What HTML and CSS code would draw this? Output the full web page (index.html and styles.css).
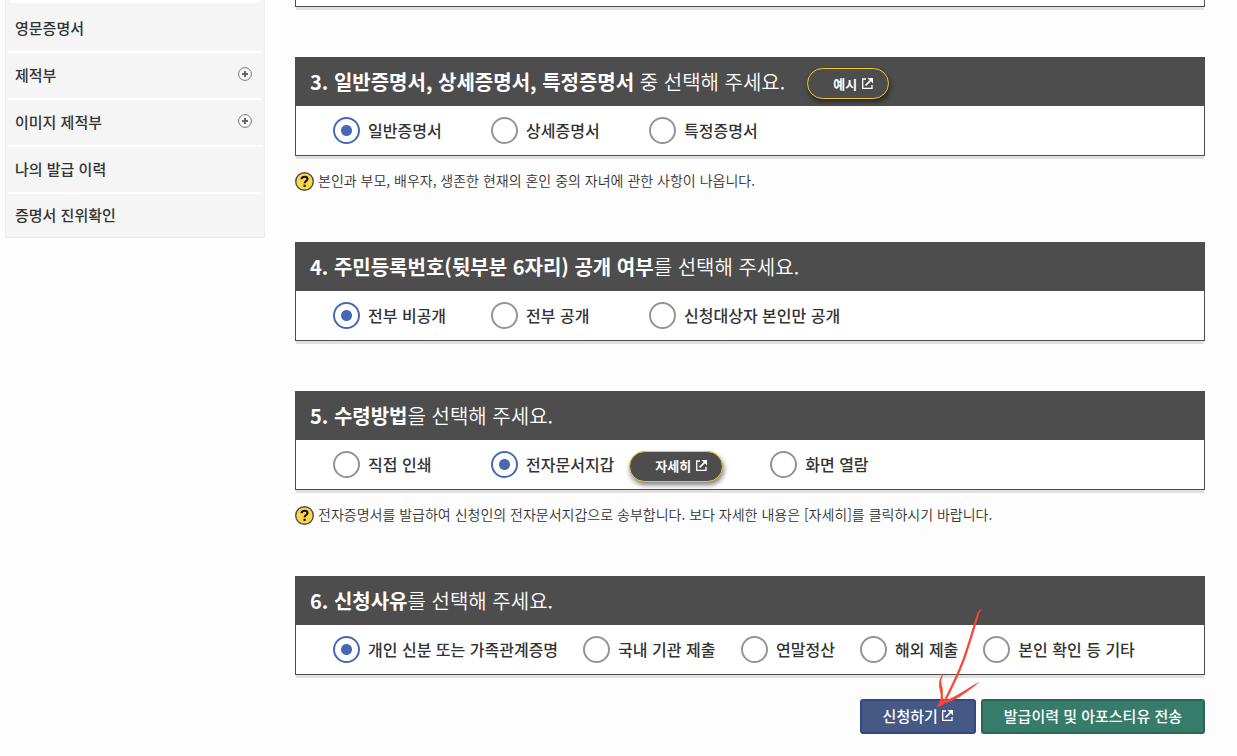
FILE: index.html
```html
<!DOCTYPE html>
<html lang="ko">
<head>
<meta charset="UTF-8">
<meta name="viewport" content="width=device-width, initial-scale=1.0">
<title>증명서 발급 신청</title>
<link rel="stylesheet" href="styles.css">
</head>
<body>

<svg class="defs" aria-hidden="true">
  <symbol id="icon-open" viewBox="0 0 11 11">
    <path d="M4 1H0.700v9.300H10V7" fill="none" stroke="currentColor" stroke-width="1.300"/>
    <path d="M5.500 0H11v5.500L9.300 3.800 8.900 1.900 7.200 1.700z" fill="currentColor"/>
    <path d="M3.600 7.400l5.800-5.800" fill="none" stroke="currentColor" stroke-width="1.600"/>
  </symbol>
  <symbol id="icon-plus" viewBox="0 0 14 14">
    <circle cx="7" cy="7" r="6.400" fill="#fafafa" stroke="#777" stroke-width="1"/>
    <path d="M7 4v6M4 7h6" stroke="#666" stroke-width="2"/>
  </symbol>
  <symbol id="icon-help" viewBox="0 0 19 19">
    <circle cx="9.500" cy="9.500" r="8.800" fill="#fad749" stroke="#4d4d4d" stroke-width="1.400"/>
    <path d="M6.500 7.300C6.600 5.500 8 4.700 9.600 4.700c1.700 0 2.900.9 2.900 2.300 0 2-2.900 2-2.900 4.300" fill="none" stroke="#111" stroke-width="2.100"/>
    <path d="M8.500 12.700h2.200v2.200h-2.200z" fill="#111"/>
  </symbol>
</svg>

<div class="page">
  <nav class="side">
    <div class="side-sub"></div>
    <ul>
      <li><a href="#">영문증명서</a></li>
      <li><a href="#">제적부<svg><use href="#icon-plus"/></svg></a></li>
      <li><a href="#">이미지 제적부<svg><use href="#icon-plus"/></svg></a></li>
      <li><a href="#">나의 발급 이력</a></li>
      <li><a href="#">증명서 진위확인</a></li>
    </ul>
  </nav>

  <main>
    <div class="box box-prev"></div>

    <section>
      <div class="box">
        <h2><span><b>3. 일반증명서, 상세증명서, 특정증명서</b> 중 선택해 주세요.</span>
          <button type="button" class="pill">예시<svg><use href="#icon-open"/></svg></button></h2>
        <div class="options">
          <label><input type="radio" name="kind" checked><span>일반증명서</span></label>
          <label><input type="radio" name="kind"><span>상세증명서</span></label>
          <label><input type="radio" name="kind"><span>특정증명서</span></label>
        </div>
      </div>
      <p class="note"><svg><use href="#icon-help"/></svg><span>본인과 부모, 배우자, 생존한 현재의 혼인 중의 자녀에 관한 사항이 나옵니다.</span></p>
    </section>

    <section>
      <div class="box">
        <h2><span><b>4. 주민등록번호(뒷부분 6자리) 공개 여부</b>를 선택해 주세요.</span></h2>
        <div class="options">
          <label><input type="radio" name="open" checked><span>전부 비공개</span></label>
          <label><input type="radio" name="open"><span>전부 공개</span></label>
          <label><input type="radio" name="open"><span>신청대상자 본인만 공개</span></label>
        </div>
      </div>
    </section>

    <section>
      <div class="box">
        <h2><span><b>5. 수령방법</b>을 선택해 주세요.</span></h2>
        <div class="options">
          <label><input type="radio" name="receive"><span>직접 인쇄</span></label>
          <div class="with-pill">
            <label><input type="radio" name="receive" checked><span>전자문서지갑</span></label>
            <button type="button" class="pill">자세히<svg><use href="#icon-open"/></svg></button>
          </div>
          <label><input type="radio" name="receive"><span>화면 열람</span></label>
        </div>
      </div>
      <p class="note"><svg><use href="#icon-help"/></svg><span>전자증명서를 발급하여 신청인의 전자문서지갑으로 송부합니다. 보다 자세한 내용은 [자세히]를 클릭하시기 바랍니다.</span></p>
    </section>

    <section>
      <div class="box">
        <h2><span><b>6. 신청사유</b>를 선택해 주세요.</span></h2>
        <div class="options">
          <label><input type="radio" name="reason" checked><span>개인 신분 또는 가족관계증명</span></label>
          <label><input type="radio" name="reason"><span>국내 기관 제출</span></label>
          <label><input type="radio" name="reason"><span>연말정산</span></label>
          <label><input type="radio" name="reason"><span>해외 제출</span></label>
          <label><input type="radio" name="reason"><span>본인 확인 등 기타</span></label>
        </div>
      </div>
    </section>

    <div class="actions">
      <div class="apply">
        <button type="button" class="btn blue">신청하기<svg><use href="#icon-open"/></svg></button>
        <svg class="arrow" viewBox="0 0 60 110" aria-hidden="true">
          <path d="M53 4.500C50 4 48 6 47 9C42 24 38 39 33 53C27 69 21 81 13 97L15.500 97C23 82 30 68 35.500 53C40 39 45 24 49 9C50 6 51 5 53 4.500Z"/>
          <path d="M15 68C9 71 8 78 10 86C11.500 92 11 96 7 101C9 102.500 12 101 15 98C23 97 37 88 50 76.500C36 84 24 93 14 96C12 92 13.500 88 12.500 83C10.500 77 11 72 15 68Z"/>
        </svg>
      </div>
      <button type="button" class="btn green">발급이력 및 아포스티유 전송</button>
    </div>
  </main>
</div>

</body>
</html>
```

FILE: styles.css
```css
* {margin: 0; padding: 0; box-sizing: border-box;}
body {
  background: #fdfdfd; color: #333;
  font-family: "Noto Sans CJK KR", "Noto Sans", sans-serif;
}
button {font-family: inherit; cursor: pointer;}
.defs {display: none;}

.page {display: flex; align-items: flex-start; gap: 30px; padding: 0 32px 22px 5px;}

/* left menu */
.side {flex: 0 0 260px; background: #f5f5f5; border: 1px solid #ededed; border-top: 0; padding: 0 2px;}
.side-sub {height: 3px; margin: 0 2px; background: #fff; border-radius: 0 0 3px 3px;}
.side ul {list-style: none;}
.side li + li {border-top: 2px solid #fff;}
.side a {
  display: flex; justify-content: space-between; align-items: center;
  height: 45px; padding: 0 10px 3px 7px;
  color: #333; font-size: 15px; font-weight: 500; text-decoration: none;
}
.side li:first-child a {height: 48px; padding-top: 4px;}
.side li:last-child a {height: 43px; padding-bottom: 2px;}
.side a svg {width: 14px; height: 14px;}

/* question boxes */
main {flex: 1;}
.box {background: #fff; border: 1px solid #4d4d4d; box-shadow: 0 4px 0 -1px #e0e0e0;}
.box-prev {height: 7px; border-top: 0;}
section {margin-top: 50px;}
h2 {
  display: flex; align-items: center; gap: 22px;
  height: 48px; padding: 0 14px;
  background: #4d4d4d; color: #fff; font-size: 20px; font-weight: 350;
}
h2 b {font-weight: 700;}
h2 span, .options span, .note span {padding-bottom: 2px;}
.options {display: flex; align-items: center; gap: 25px; height: 49px; padding: 0 37px;}
.options label {
  display: flex; align-items: center; gap: 8px; min-width: 133px;
  font-size: 16px; font-weight: 500; white-space: nowrap;
}
.options label:nth-child(n+3) {min-width: 0;}
.with-pill {display: flex; align-items: center; gap: 15px; margin-right: 22px;}
.with-pill label {min-width: 0;}
input[type="radio"] {
  appearance: none; width: 27px; height: 27px;
  border: 2px solid #949494; border-radius: 50%; background: #fff;
}
input[type="radio"]:checked {
  border-color: #456ab3;
  background: radial-gradient(circle, #456ab3 5px, #fff 6px);
}
.pill {
  display: flex; align-items: center; gap: 5px;
  height: 31px; margin-top: 3px; padding: 0 15px 1px 25px;
  background: #4d4d4d; border: 1px solid #f2c832; border-radius: 16px;
  box-shadow: 1px 3px 5px rgba(0, 0, 0, 0.5);
  color: #fff; font-size: 13px; font-weight: 700;
}
.pill svg, .btn svg {width: 11px; height: 11px;}
.note {
  display: flex; align-items: center; gap: 4px;
  padding-top: 15px; font-size: 14px; line-height: 19px; font-weight: 350;
}
.note svg {width: 19px; height: 19px;}

/* bottom buttons */
.actions {display: flex; justify-content: flex-end; gap: 5px; margin-top: 24px;}
.apply {position: relative;}
.btn {
  display: flex; align-items: center; gap: 4px;
  height: 35px; padding: 0 21px 3px;
  border: 2px solid; border-radius: 3px;
  color: #fff; font-size: 15px; font-weight: 500;
}
.blue {background: #465985; border-color: #32487f;}
.green {background: #377b6b; border-color: #2a6656;}
.arrow {position: absolute; left: 70px; top: -94px; width: 60px; height: 110px; fill: #f9463b; pointer-events: none;}
```
